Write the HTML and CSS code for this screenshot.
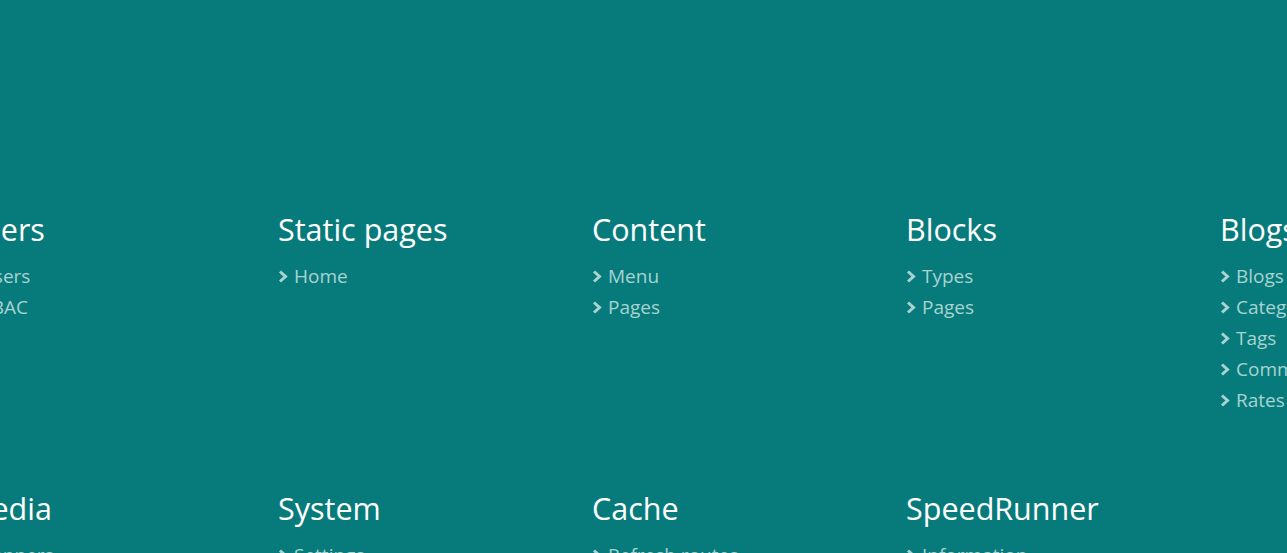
FILE: index.html
```html
<!DOCTYPE html>
<html>
<head>
<meta charset="utf-8">
<link rel="stylesheet" href="styles.css">
</head>
<body>
<div class="menu">
  <section class="group">
    <h2 class="title">Users</h2>
    <ul class="links">
      <li><svg class="chev" viewBox="0 0 10 13"><polyline points="2,1.5 7.5,6.5 2,11.5"/></svg>Users</li>
      <li><svg class="chev" viewBox="0 0 10 13"><polyline points="2,1.5 7.5,6.5 2,11.5"/></svg>RBAC</li>
    </ul>
  </section>
  <section class="group">
    <h2 class="title">Static pages</h2>
    <ul class="links">
      <li><svg class="chev" viewBox="0 0 10 13"><polyline points="2,1.5 7.5,6.5 2,11.5"/></svg>Home</li>
    </ul>
  </section>
  <section class="group">
    <h2 class="title">Content</h2>
    <ul class="links">
      <li><svg class="chev" viewBox="0 0 10 13"><polyline points="2,1.5 7.5,6.5 2,11.5"/></svg>Menu</li>
      <li><svg class="chev" viewBox="0 0 10 13"><polyline points="2,1.5 7.5,6.5 2,11.5"/></svg>Pages</li>
    </ul>
  </section>
  <section class="group">
    <h2 class="title">Blocks</h2>
    <ul class="links">
      <li><svg class="chev" viewBox="0 0 10 13"><polyline points="2,1.5 7.5,6.5 2,11.5"/></svg>Types</li>
      <li><svg class="chev" viewBox="0 0 10 13"><polyline points="2,1.5 7.5,6.5 2,11.5"/></svg>Pages</li>
    </ul>
  </section>
  <section class="group">
    <h2 class="title">Blogs</h2>
    <ul class="links">
      <li><svg class="chev" viewBox="0 0 10 13"><polyline points="2,1.5 7.5,6.5 2,11.5"/></svg>Blogs</li>
      <li><svg class="chev" viewBox="0 0 10 13"><polyline points="2,1.5 7.5,6.5 2,11.5"/></svg>Categories</li>
      <li><svg class="chev" viewBox="0 0 10 13"><polyline points="2,1.5 7.5,6.5 2,11.5"/></svg>Tags</li>
      <li><svg class="chev" viewBox="0 0 10 13"><polyline points="2,1.5 7.5,6.5 2,11.5"/></svg>Comments</li>
      <li><svg class="chev" viewBox="0 0 10 13"><polyline points="2,1.5 7.5,6.5 2,11.5"/></svg>Rates</li>
    </ul>
  </section>
  <section class="group">
    <h2 class="title">Media</h2>
    <ul class="links">
      <li><svg class="chev" viewBox="0 0 10 13"><polyline points="2,1.5 7.5,6.5 2,11.5"/></svg>Banners</li>
    </ul>
  </section>
  <section class="group">
    <h2 class="title">System</h2>
    <ul class="links">
      <li><svg class="chev" viewBox="0 0 10 13"><polyline points="2,1.5 7.5,6.5 2,11.5"/></svg>Settings</li>
    </ul>
  </section>
  <section class="group">
    <h2 class="title">Cache</h2>
    <ul class="links">
      <li><svg class="chev" viewBox="0 0 10 13"><polyline points="2,1.5 7.5,6.5 2,11.5"/></svg>Refresh routes</li>
    </ul>
  </section>
  <section class="group">
    <h2 class="title">SpeedRunner</h2>
    <ul class="links">
      <li><svg class="chev" viewBox="0 0 10 13"><polyline points="2,1.5 7.5,6.5 2,11.5"/></svg>Information</li>
    </ul>
  </section>
</div>
</body>
</html>
```
FILE: styles.css
```css
html, body {
  margin: 0;
  padding: 0;
  background: #077b7b;
  overflow: hidden;
  height: 553px;
}
body {
  font-family: "Open Sans", "Noto Sans", sans-serif;
}
.menu {
  display: grid;
  grid-template-columns: repeat(5, 314px);
  grid-auto-rows: 279px;
  margin-left: -36px;
  padding-top: 209px;
}
.group {
  margin: 0;
}
.title {
  margin: 0;
  font-size: 30.5px;
  line-height: 40px;
  font-weight: 400;
  color: #ffffff;
}
.links {
  list-style: none;
  margin: 12px 0 0 0;
  padding: 0;
}
.links li {
  font-size: 19px;
  line-height: 31px;
  color: #a8d3d1;
  display: flex;
  align-items: center;
}
.chev {
  width: 10px;
  height: 13px;
  flex: none;
  margin: 0 6px 0 0;
  fill: none;
  stroke: #a8d3d1;
  stroke-width: 3;
}
```
